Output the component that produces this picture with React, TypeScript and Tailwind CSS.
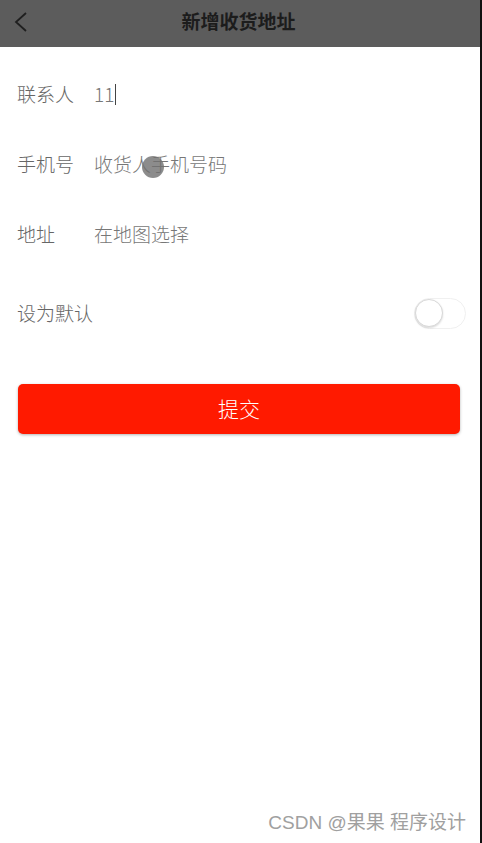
const font = { fontFamily: '"Noto Sans CJK SC", "Noto Sans", sans-serif' };

function Row({ label, children, className = "" }: { label: string; children?: React.ReactNode; className?: string }) {
  return (
    <div className={`flex items-center h-[70px] px-[17px] text-[19px] font-light text-[#666] ${className}`}>
      <span className="w-[77px] shrink-0">{label}</span>
      {children}
    </div>
  );
}

export default function App() {
  return (
    <div className="relative w-[482px] h-[843px] bg-white flex flex-col overflow-hidden" style={font}>
      <header className="flex items-center h-[47px] bg-[#5c5c5c] shrink-0">
        <svg className="ml-[13px] mb-[3px] w-[16px] h-[22px]" viewBox="0 0 16 22" fill="none" stroke="#1f1f1f" strokeWidth="1.8">
          <path d="M13 2 L3 11 L13 20" />
        </svg>
        <h1 className="flex-1 text-center pr-[34px] mb-[4px] text-[19px] font-bold text-[#1c1c1c]">新增收货地址</h1>
      </header>

      <div className="flex flex-col pt-[12px]">
        <Row label="联系人">
          <span className="text-[#777] flex items-center">
            11<span className="inline-block w-px h-[21px] bg-[#444] ml-px" />
          </span>
        </Row>
        <Row label="手机号">
          <span className="text-[#777]">收货人手机号码</span>
        </Row>
        <Row label="地址">
          <span className="text-[#777]">在地图选择</span>
        </Row>
        <div className="flex items-center justify-between h-[70px] pl-[17px] pr-[16px] mt-[9px] text-[19px] font-light text-[#666]">
          <span>设为默认</span>
          <div className="w-[52px] h-[31px] rounded-full bg-white border border-[#f0f0f0] flex items-center">
            <div className="w-[28px] h-[28px] rounded-full bg-white border border-[#d8d8d8] shadow-[0_1px_2px_rgba(0,0,0,0.15)]" />
          </div>
        </div>
      </div>

      <div className="px-[18px] mt-[36px] pr-[22px]">
        <button className="w-full h-[50px] rounded-[5px] bg-[#ff1a00] text-white text-[21px] font-light shadow-[0_1px_3px_rgba(0,0,0,0.3)]">
          提交
        </button>
      </div>

      <div className="absolute left-[142px] top-[156px] w-[22px] h-[22px] rounded-full bg-[#6f6f6f]/80" />

      <div
        className="mt-auto mb-[6px] text-right pr-[16px] text-[19px] text-[#a0a0a0]"
        style={{ fontFamily: '"Liberation Sans", "Noto Sans CJK SC", sans-serif' }}
      >
        CSDN @果果 程序设计
      </div>

      <div className="absolute right-0 top-0 bottom-0 w-[2px] bg-[#111]" />
    </div>
  );
}
